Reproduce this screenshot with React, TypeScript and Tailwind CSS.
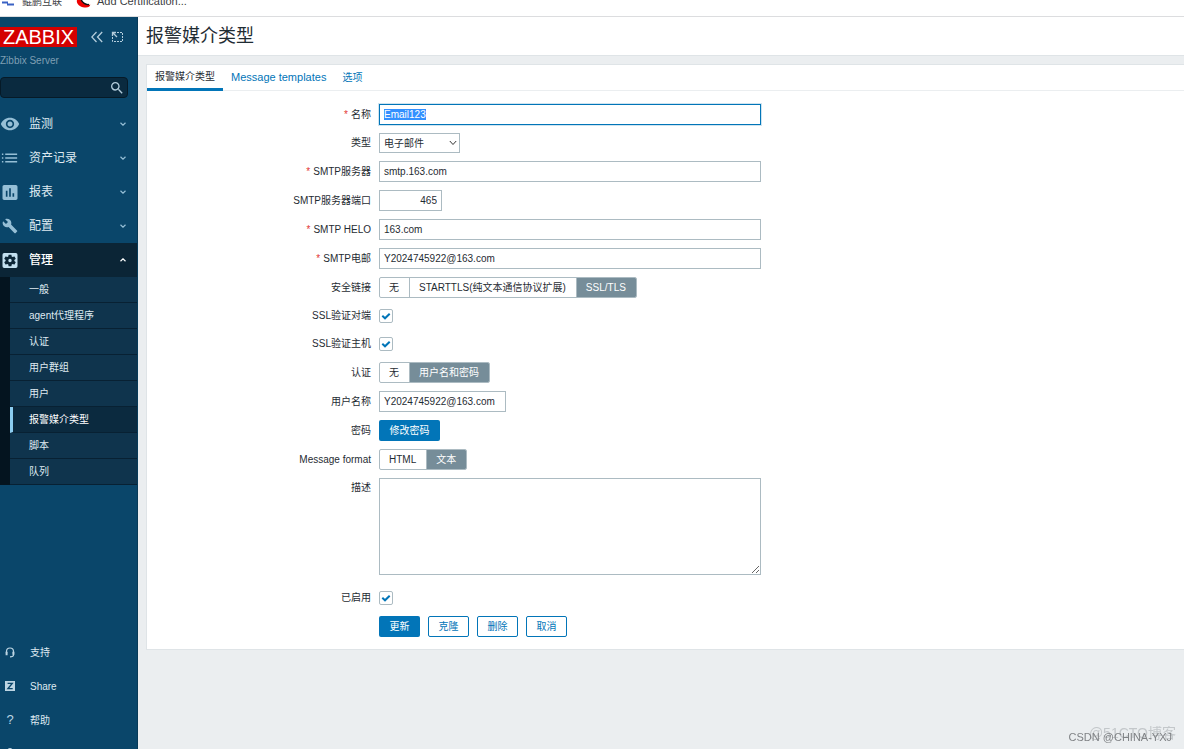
import { useEffect, useRef } from 'react';
import type { ReactNode } from 'react';
import {
  MdVisibility,
  MdAssessment,
  MdBuild,
  MdSettingsApplications,
  MdSearch,
  MdPerson,
} from 'react-icons/md';

function ListIcon() {
  return (
    <svg width="21" height="21" viewBox="0 0 21 21" stroke="currentColor" strokeWidth="1.5">
      <path d="M2 6h1.500M2 10h1.500M2 14h1.500" />
      <path d="M5.500 6h12.500M5.500 10h12.500M5.500 14h12.500" />
    </svg>
  );
}

function HeadsetIcon() {
  return (
    <svg width="10" height="11" viewBox="0 0 10 11" fill="none" stroke="currentColor" strokeWidth="1.2">
      <path d="M1.500 6.500V4.500C1.500 2.300 3 1 5 1S8.500 2.300 8.500 4.500V8C8.500 9.300 7.500 9.800 5 9.800" />
      <path d="M1.600 4.800v3.400M8.400 4.800v3" strokeWidth="2" />
    </svg>
  );
}

function ShareIcon() {
  return (
    <svg width="10" height="10" viewBox="0 0 10 10">
      <rect width="10" height="10" fill="currentColor" />
      <path d="M2.600 2.400h4.600L3 7.600h4.700" fill="none" stroke="#0a466a" strokeWidth="1.4" />
    </svg>
  );
}

function Chevron({ up = false }: { up?: boolean }) {
  return (
    <svg width="6" height="4" viewBox="0 0 6 4" fill="none" stroke="currentColor" strokeWidth="1.2">
      <path d={up ? 'M0.5 3.2L3 0.8L5.5 3.2' : 'M0.5 0.8L3 3.2L5.5 0.8'} />
    </svg>
  );
}

const mainMenu = [
  { label: '监测', icon: <MdVisibility size={20} /> },
  { label: '资产记录', icon: <ListIcon /> },
  { label: '报表', icon: <MdAssessment size={21} /> },
  { label: '配置', icon: <MdBuild size={16} /> },
];

const subMenu = ['一般', 'agent代理程序', '认证', '用户群组', '用户', '报警媒介类型', '脚本', '队列'];

const footerMenu = [
  { label: '支持', icon: <HeadsetIcon /> },
  { label: 'Share', icon: <ShareIcon /> },
  { label: '帮助', icon: <span className="text-[13px]">?</span> },
];

function Bookmarks() {
  return (
    <div className="h-[17px] shrink-0 overflow-hidden border-b border-[#dcdddf] bg-white text-[#3c4043]">
      <div className="-mt-[7px] flex h-4 items-center">
        <a href="#" className="flex items-center gap-2 text-[10px]">
          <svg width="14" height="12" viewBox="0 0 14 12">
            <path d="M2 7.500h6M7 9.500h7" stroke="#3b62c4" strokeWidth="2" />
          </svg>
          鲲鹏互联
        </a>
        <a href="#" className="ml-3.5 flex items-center gap-1.5 text-[11px]">
          <svg width="15" height="14" viewBox="0 0 15 14">
            <path
              d="M1 6C0 9 3 13 8.500 13.500C12 14 14.500 12.500 14.200 10.500C13.500 11.500 6 10 5 5Z"
              fill="#e00"
            />
            <path d="M5 5c1 4 5 6 8 5.500" fill="none" stroke="#111" strokeWidth="1.4" />
          </svg>
          Add Certification...
        </a>
      </div>
    </div>
  );
}

function Sidebar() {
  return (
    <aside className="flex w-[138px] shrink-0 flex-col overflow-hidden border-r border-[#083a58] bg-[#0a466a] text-[#dfeaf1]">
      <div className="flex items-center pt-[10px]">
        <a
          href="#"
          className="flex h-5 w-[77px] items-center justify-center bg-[#d40000] text-[20px] leading-5 text-white"
        >
          ZABBIX
        </a>
        <button type="button" aria-label="收起" className="ml-3.5 text-[#b4cddc]">
          <svg width="12" height="12" viewBox="0 0 12 12" fill="none" stroke="currentColor" strokeWidth="1.3">
            <path d="M5.500 1L0.800 6L5.500 11M11.200 1L6.500 6L11.200 11" />
          </svg>
        </button>
        <button type="button" aria-label="隐藏" className="ml-2 text-[#b4cddc]">
          <svg width="12" height="12" viewBox="0 0 12 12" fill="none" stroke="currentColor">
            <path d="M6 1.500h5.500v9H1.500V6" strokeDasharray="2 1" />
            <path d="M1.500 5V1.500H5M1.500 1.500L6 6" strokeWidth="1.300" />
          </svg>
        </button>
      </div>
      <div className="mt-1.5 text-[10px] leading-4 text-[#7f9fb3]">Zibbix Server</div>
      <div className="mt-2 flex h-[21px] w-32 items-center rounded-sm border border-[#061a27] bg-[#0a2a3f]">
        <input aria-label="搜索" className="h-full min-w-0 flex-1 px-1 text-[10px] outline-none" />
        <button type="button" aria-label="搜索" className="px-0.5 text-[#b4cddc]">
          <MdSearch size={16} />
        </button>
      </div>

      <nav className="mt-[9px] text-[12px]">
        {mainMenu.map((item) => (
          <a key={item.label} href="#" className="flex h-[34px] items-center pr-[11px]">
            <span className="flex w-5 justify-center text-[#96bfd6]">{item.icon}</span>
            <span className="ml-[9px] flex-1">{item.label}</span>
            <span className="text-[#96bfd6]">
              <Chevron />
            </span>
          </a>
        ))}
        <a href="#" className="flex h-[34px] items-center bg-[#0b2536] pr-[11px] text-white">
          <span className="flex w-5 justify-center text-[#c3e0f0]">
            <MdSettingsApplications size={21} />
          </span>
          <span className="ml-[9px] flex-1 font-medium">管理</span>
          <Chevron up />
        </a>
        <div className="border-l-[10px] border-[#04141f] bg-[#0f344d] text-[10px]">
          {subMenu.map((name) => (
            <a
              key={name}
              href="#"
              className={
                name === '报警媒介类型'
                  ? 'flex h-[26px] items-center border-b border-b-[#082133] border-l-[3px] border-l-[#8bcdf0] bg-[#0b2a3f] pl-4 text-white'
                  : 'flex h-[26px] items-center border-b border-b-[#082133] pl-[19px]'
              }
            >
              {name}
            </a>
          ))}
        </div>
      </nav>

      <nav className="mt-auto -mb-[22px] text-[10px]">
        {footerMenu.map((item) => (
          <a key={item.label} href="#" className="flex h-[34px] items-center">
            <span className="flex w-5 justify-center text-[#bdd5e3]">{item.icon}</span>
            <span className="ml-2.5">{item.label}</span>
          </a>
        ))}
        <a href="#" aria-label="用户" className="flex h-[34px] w-5 items-center justify-center text-[#bdd5e3]">
          <MdPerson size={18} />
        </a>
      </nav>
    </aside>
  );
}

const inputClass = 'h-[21px] border border-[#acbbc2] bg-white px-1 text-[10px] outline-none';

interface RowProps {
  label?: string;
  htmlFor?: string;
  required?: boolean;
  className?: string;
  children: ReactNode;
}

function Row({ label, htmlFor, required, className = 'h-[21px] items-center', children }: RowProps) {
  return (
    <div className={`flex gap-2 ${className}`}>
      <label htmlFor={htmlFor} className="w-56 shrink-0 text-right leading-5">
        {required && <span className="mr-[3px] text-[#e33734]">*</span>}
        {label}
      </label>
      {children}
    </div>
  );
}

function Segmented({ name, options, value }: { name: string; options: string[]; value: string }) {
  return (
    <div role="radiogroup" aria-label={name} className="flex h-[21px] overflow-hidden rounded-xs border border-[#acbbc2]">
      {options.map((o) => (
        <label
          key={o}
          className="flex items-center border-r border-[#acbbc2] pr-2.5 pl-[9px] last:border-r-0 has-checked:bg-[#768d99] has-checked:text-white"
        >
          <input type="radio" name={name} defaultChecked={o === value} className="sr-only" />
          {o}
        </label>
      ))}
    </div>
  );
}

function Checkbox({ id }: { id: string }) {
  return (
    <span className="relative flex">
      <input
        id={id}
        type="checkbox"
        defaultChecked
        className="peer size-3.5 appearance-none rounded-xs border border-[#acbbc2] bg-white"
      />
      <svg
        className="pointer-events-none absolute inset-0 hidden peer-checked:block"
        width="14"
        height="14"
        viewBox="0 0 14 14"
        fill="none"
        stroke="#0275b8"
        strokeWidth="2"
      >
        <path d="M3.300 6.800L6 9.300L10.700 4.700" />
      </svg>
    </span>
  );
}

function MediaTypeForm() {
  const nameRef = useRef<HTMLInputElement>(null);

  useEffect(() => {
    nameRef.current?.focus();
    nameRef.current?.select();
  }, []);

  return (
    <form className="flex flex-col gap-2 pt-[13px] pb-3">
      <Row label="名称" htmlFor="name" required>
        <input
          ref={nameRef}
          id="name"
          defaultValue="Email123"
          className="h-[21px] w-[382px] border border-[#0275b8] px-1 text-[10px] shadow-[0_0_0_1px_#cfe4f0] outline-none selection:bg-[#3390ff] selection:text-white"
        />
      </Row>
      <Row label="类型" htmlFor="type" className="h-5 items-center">
        <div className="relative">
          <select id="type" className="h-5 w-[81px] appearance-none border border-[#acbbc2] bg-white pl-1 text-[10px] outline-none">
            <option>电子邮件</option>
          </select>
          <svg
            className="pointer-events-none absolute top-[7px] right-[3px]"
            width="8"
            height="6"
            viewBox="0 0 8 6"
            fill="none"
            stroke="#333"
          >
            <path d="M0.800 1L4 4.500L7.200 1" />
          </svg>
        </div>
      </Row>
      <Row label="SMTP服务器" htmlFor="server" required>
        <input id="server" defaultValue="smtp.163.com" className={`${inputClass} w-[382px]`} />
      </Row>
      <Row label="SMTP服务器端口" htmlFor="port">
        <input id="port" defaultValue="465" className={`${inputClass} w-[63px] text-right`} />
      </Row>
      <Row label="SMTP HELO" htmlFor="helo" required>
        <input id="helo" defaultValue="163.com" className={`${inputClass} w-[382px]`} />
      </Row>
      <Row label="SMTP电邮" htmlFor="email" required>
        <input id="email" defaultValue="Y2024745922@163.com" className={`${inputClass} w-[382px]`} />
      </Row>
      <Row label="安全链接">
        <Segmented name="安全链接" options={['无', 'STARTTLS(纯文本通信协议扩展)', 'SSL/TLS']} value="SSL/TLS" />
      </Row>
      <Row label="SSL验证对端" htmlFor="verify-peer" className="h-5 items-center">
        <Checkbox id="verify-peer" />
      </Row>
      <Row label="SSL验证主机" htmlFor="verify-host" className="h-5 items-center">
        <Checkbox id="verify-host" />
      </Row>
      <Row label="认证">
        <Segmented name="认证" options={['无', '用户名和密码']} value="用户名和密码" />
      </Row>
      <Row label="用户名称" htmlFor="username">
        <input id="username" defaultValue="Y2024745922@163.com" className={`${inputClass} w-[127px]`} />
      </Row>
      <Row label="密码">
        <button type="button" className="h-[21px] w-[61px] rounded-xs bg-[#0275b8] text-white">
          修改密码
        </button>
      </Row>
      <Row label="Message format">
        <Segmented name="Message format" options={['HTML', '文本']} value="文本" />
      </Row>
      <Row label="描述" htmlFor="description" className="items-start pb-1">
        <textarea id="description" className="block h-[97px] w-[382px] border border-[#acbbc2] p-1 outline-none" />
      </Row>
      <Row label="已启用" htmlFor="enabled" className="h-[21px] items-center">
        <Checkbox id="enabled" />
      </Row>
      <Row>
        <div className="flex gap-2">
          <button type="submit" className="h-[21px] w-[41px] rounded-xs bg-[#0275b8] text-white">
            更新
          </button>
          {['克隆', '删除', '取消'].map((t) => (
            <button key={t} type="button" className="h-[21px] w-[41px] rounded-xs border border-[#0275b8] text-[#0275b8]">
              {t}
            </button>
          ))}
        </div>
      </Row>
    </form>
  );
}

export default function App() {
  return (
    <div className="flex h-screen flex-col overflow-hidden bg-[#ebeef0] font-['Liberation_Sans','Noto_Sans_CJK_SC',sans-serif] text-[10px] text-[#1f2c33]">
      <Bookmarks />
      <div className="flex min-h-0 flex-1">
        <Sidebar />
        <main className="min-w-0 flex-1 overflow-hidden">
          <header className="flex h-[39px] items-center border-b border-[#dfe4e7] bg-white pl-2">
            <h1 className="text-[18px]">报警媒介类型</h1>
          </header>
          <div className="mt-2 ml-2 border-y border-l border-[#dfe4e7] bg-white">
            <nav className="flex h-[26px] border-b border-[#ebeef0] text-[#0275b8]">
              <a href="#" className="-mb-px flex items-center border-b-[3px] border-[#0275b8] px-2 text-[#1f2c33]">
                报警媒介类型
              </a>
              <a href="#" className="flex items-center px-2 text-[11px]">
                Message templates
              </a>
              <a href="#" className="flex items-center px-2">
                选项
              </a>
            </nav>
            <MediaTypeForm />
          </div>
        </main>
      </div>
      <div className="pointer-events-none fixed right-2 bottom-2 text-[14px] leading-4 text-[#c3c7ca]">@51CTO博客</div>
      <div className="pointer-events-none fixed right-3 bottom-1 text-[11px] leading-4 text-[#808386]">CSDN @CHINA-YXJ</div>
    </div>
  );
}
